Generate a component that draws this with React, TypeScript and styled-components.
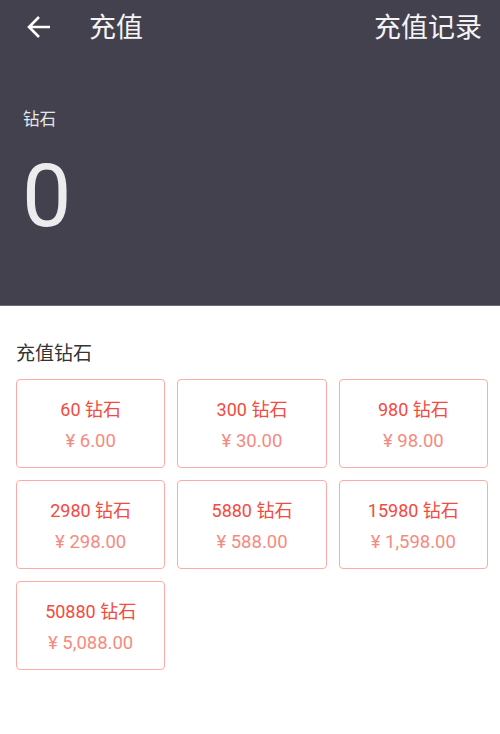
import React from "react";
import styled, { createGlobalStyle } from "styled-components";

const Global = createGlobalStyle`
  html, body { margin: 0; padding: 0; background: #ffffff; }
  body { font-family: Roboto, "Noto Sans CJK SC", sans-serif; }
  * { box-sizing: border-box; }
`;

const Page = styled.div`
  width: 500px;
  min-height: 734px;
  background: #ffffff;
`;

const Hero = styled.div`
  background: #42414d;
  height: 306px;
  border-bottom: 1px solid #6c6b78;
  color: #ffffff;
`;

const Toolbar = styled.div`
  height: 56px;
  display: flex;
  align-items: center;
  padding: 0 18px 0 27px;
`;

const BackButton = styled.div`
  width: 24px;
  height: 24px;
  display: flex;
  margin-top: -2px;
`;

const Title = styled.div`
  margin-left: 38px;
  font-size: 27px;
  line-height: 32px;
  flex: 1;
  color: #f4f4f6;
`;

const Action = styled.div`
  font-size: 27px;
  line-height: 32px;
  color: #f4f4f6;
`;

const Balance = styled.div`
  padding: 54px 24px 0 23px;
`;

const BalanceLabel = styled.div`
  font-size: 16.5px;
  color: #e6e6ea;
  line-height: 20px;
`;

const BalanceValue = styled.div`
  margin-top: 22px;
  font-size: 88px;
  font-weight: 400;
  line-height: 88px;
  color: #ececee;
  margin-left: -1px;
`;

const Section = styled.div`
  padding: 36px 12px 0 16px;
`;

const SectionTitle = styled.div`
  font-size: 19px;
  color: #333333;
  line-height: 24px;
`;

const Grid = styled.div`
  margin-top: 13px;
  display: grid;
  grid-template-columns: repeat(3, 1fr);
  column-gap: 12px;
  row-gap: 12px;
`;

const Card = styled.div`
  height: 89px;
  border: 1.5px solid #ffaaa6;
  border-radius: 4px;
  display: flex;
  flex-direction: column;
  align-items: center;
  justify-content: center;
  padding-top: 4px;
`;

const CardAmount = styled.div`
  font-size: 18px;
  color: #f44a40;
  line-height: 22px;
`;

const CardPrice = styled.div`
  margin-top: 9px;
  font-size: 18.5px;
  color: #f78a80;
  line-height: 22px;
`;

const items = [
  { d: "60", p: "6.00" },
  { d: "300", p: "30.00" },
  { d: "980", p: "98.00" },
  { d: "2980", p: "298.00" },
  { d: "5880", p: "588.00" },
  { d: "15980", p: "1,598.00" },
  { d: "50880", p: "5,088.00" },
];

export default function App() {
  return (
    <Page>
      <Global />
      <Hero>
        <Toolbar>
          <BackButton>
            <svg width="24" height="24" viewBox="0 0 24 24">
              <path
                d="M23 12H2.5M12 2L2 12 12 22"
                fill="none"
                stroke="#ffffff"
                strokeWidth="2.6"
                strokeLinejoin="miter"
              />
            </svg>
          </BackButton>
          <Title>充值</Title>
          <Action>充值记录</Action>
        </Toolbar>
        <Balance>
          <BalanceLabel>钻石</BalanceLabel>
          <BalanceValue>0</BalanceValue>
        </Balance>
      </Hero>
      <Section>
        <SectionTitle>充值钻石</SectionTitle>
        <Grid>
          {items.map((it) => (
            <Card key={it.d}>
              <CardAmount>{it.d} 钻石</CardAmount>
              <CardPrice>¥ {it.p}</CardPrice>
            </Card>
          ))}
        </Grid>
      </Section>
    </Page>
  );
}
